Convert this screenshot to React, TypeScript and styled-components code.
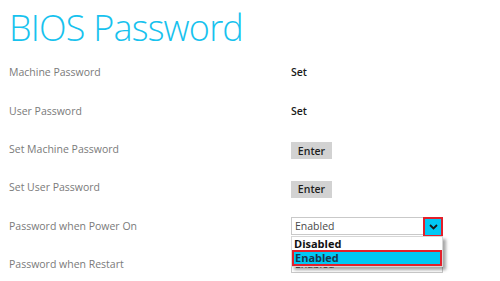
import React from "react";
import styled, { createGlobalStyle } from "styled-components";

const GlobalStyle = createGlobalStyle`
  html, body {
    margin: 0;
    padding: 0;
    background: #ffffff;
  }
  body {
    font-family: "Open Sans", "Noto Sans", sans-serif;
  }
`;

const Page = styled.div`
  width: 500px;
  height: 281px;
  overflow: hidden;
  padding: 0 9px;
  box-sizing: border-box;
`;

const Title = styled.h1`
  margin: 10px 0 7px 0;
  font-size: 36px;
  line-height: 36px;
  font-weight: 300;
  color: #17c2ee;
  letter-spacing: -0.8px;
`;

const Rows = styled.div`
  display: flex;
  flex-direction: column;
`;

const Row = styled.div`
  display: grid;
  grid-template-columns: 282px 1fr;
  align-items: center;
  height: 38.4px;
`;

const Label = styled.div`
  font-size: 10.5px;
  color: #7a7a7a;
`;

const Value = styled.div`
  font-size: 10.5px;
  font-weight: 600;
  color: #1a1a1a;
`;

const EnterButton = styled.button`
  width: 41px;
  height: 17px;
  padding: 0;
  border: none;
  background: #d2d2d2;
  font-family: "Open Sans", sans-serif;
  font-size: 10.5px;
  font-weight: 600;
  color: #1e1e1e;
`;

const SelectWrap = styled.div`
  position: relative;
  width: 152px;
`;

const SelectBox = styled.div`
  height: 18px;
  box-sizing: border-box;
  border: 1px solid #c9c9c9;
  display: flex;
  align-items: center;
  padding-left: 3px;
  font-size: 10.5px;
  color: #4a4a4a;
  background: #fff;
`;

const ArrowBox = styled.div`
  position: absolute;
  right: 0;
  top: 0;
  width: 20px;
  height: 20px;
  box-sizing: border-box;
  border: 2px solid #e3202b;
  background: #00c8f5;
  display: flex;
  align-items: center;
  justify-content: center;
`;

const List = styled.div`
  position: absolute;
  left: 0;
  top: 19px;
  width: 152px;
  background: #fff;
  border: 1px solid #d6d6d6;
  box-sizing: border-box;
  box-shadow: 3px 3px 3px rgba(0, 0, 0, 0.35);
  z-index: 2;
`;

const Option = styled.div<{ $active?: boolean }>`
  height: ${(p) => (p.$active ? "16px" : "13px")};
  box-sizing: border-box;
  display: flex;
  align-items: center;
  padding-left: ${(p) => (p.$active ? "1px" : "2px")};
  font-size: 11px;
  font-weight: 700;
  color: ${(p) => (p.$active ? "#17384f" : "#111")};
  background: ${(p) => (p.$active ? "#00c8f5" : "#fff")};
  border: ${(p) => (p.$active ? "2px solid #e3202b" : "none")};
`;

const Chevron = () => (
  <svg width="9" height="6" viewBox="0 0 9 6">
    <path d="M1 1 L4.5 4.5 L8 1" fill="none" stroke="#1a1a1a" strokeWidth="1.8" />
  </svg>
);

export default function App() {
  return (
    <Page>
      <GlobalStyle />
      <Title>BIOS Password</Title>
      <Rows>
        <Row>
          <Label>Machine Password</Label>
          <Value>Set</Value>
        </Row>
        <Row>
          <Label>User Password</Label>
          <Value>Set</Value>
        </Row>
        <Row>
          <Label>Set Machine Password</Label>
          <div>
            <EnterButton>Enter</EnterButton>
          </div>
        </Row>
        <Row>
          <Label>Set User Password</Label>
          <div>
            <EnterButton>Enter</EnterButton>
          </div>
        </Row>
        <Row>
          <Label>Password when Power On</Label>
          <SelectWrap>
            <SelectBox>Enabled</SelectBox>
            <ArrowBox>
              <Chevron />
            </ArrowBox>
            <List>
              <Option>Disabled</Option>
              <Option $active>Enabled</Option>
            </List>
          </SelectWrap>
        </Row>
        <Row>
          <Label>Password when Restart</Label>
          <SelectWrap>
            <SelectBox>Enabled</SelectBox>
          </SelectWrap>
        </Row>
      </Rows>
    </Page>
  );
}
